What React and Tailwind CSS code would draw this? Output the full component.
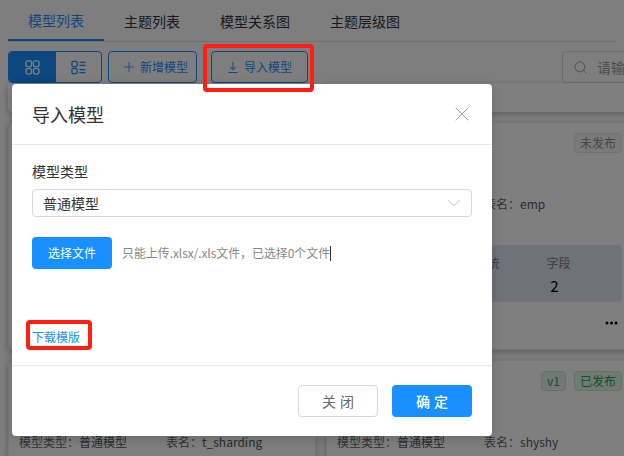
import React from "react";
import { ChevronDown, Plus, Search, X } from "lucide-react";

const tabs = ["模型列表", "主题列表", "模型关系图", "主题层级图"];

const GridIcon = () => (
  <svg width="15" height="15" viewBox="0 0 16 16" fill="none" stroke="currentColor" strokeWidth="1.4">
    <rect x="1" y="1" width="6" height="6" rx="1.5" />
    <rect x="9" y="1" width="6" height="6" rx="1.5" />
    <rect x="1" y="9" width="6" height="6" rx="2.5" />
    <rect x="9" y="9" width="6" height="6" rx="2.5" />
  </svg>
);

const ListIcon = () => (
  <svg width="15" height="15" viewBox="0 0 16 16" fill="none" stroke="currentColor" strokeWidth="1.4">
    <rect x="1" y="1.5" width="5.5" height="5.5" rx="1.5" />
    <rect x="1" y="9" width="5.5" height="5.5" rx="1.5" />
    <path d="M9 2.5h6.5M9 5.8h6.5M9 10.2h6.5M9 13.5h6.5" />
  </svg>
);

const ImportIcon = () => (
  <svg width="10" height="11" viewBox="0 0 10 11" fill="none" stroke="currentColor" strokeWidth="1">
    <path d="M5 0v7.5M2 4.8l3 3 3-3M0.5 10.5h9" />
  </svg>
);

const Tag = ({ green, children }) => (
  <span
    className={`flex h-5 items-center rounded-sm border px-[5px] text-xs ${
      green ? "border-[#c5e8cf] bg-[#e3f5e8] text-[#1aa35a]" : "border-[#e4e4e4] bg-[#f4f4f4] text-[#8c8c8c]"
    }`}
  >
    {children}
  </span>
);

const ModelCard = ({ tags, type, table, stats }) => (
  <div className="flex h-[228px] flex-col rounded-sm border border-[#ececec] bg-white pl-[10px] pr-[11px] pt-[10px] shadow-[0_2px_6px_rgba(0,0,0,0.25)]">
    <div className="flex h-5 justify-end gap-2">{tags}</div>
    <div className="mt-[41px] flex h-5 items-center text-xs text-[#666]">
      <span className="w-[147px]">{type && <>模型类型：<span className="text-[#555]">{type}</span></>}</span>
      <span>表名：<span className="text-[#555]">{table}</span></span>
    </div>
    {stats && (
      <>
        <div className="mt-[31px] flex h-[57px] justify-end rounded bg-[#dde5f3] pr-[28px] pt-[10px]">
          <div className="w-[71px] text-center text-xs text-[#777]">系统</div>
          <div className="flex w-[71px] flex-col items-center text-xs text-[#777]">
            <span>字段</span>
            <span className="mt-[5px] pr-2 text-[15px] leading-5 text-black">2</span>
          </div>
        </div>
        <div className="mt-[19px] flex justify-end pr-[4px] text-black">
          <svg width="13" height="4" viewBox="0 0 13 4" fill="currentColor">
            <circle cx="2" cy="2" r="1.5" />
            <circle cx="6.5" cy="2" r="1.5" />
            <circle cx="11" cy="2" r="1.5" />
          </svg>
        </div>
      </>
    )}
  </div>
);

export default function App() {
  return (
    <div
      className="relative h-[456px] w-[624px] overflow-hidden bg-[#fdfdfd] text-sm"
      style={{ fontFamily: '"Noto Sans CJK SC", "Liberation Sans", sans-serif' }}
    >
      <div className="mx-2 flex h-[42px] border-b border-[#e0e0e0]">
        {tabs.map((t, i) => (
          <div
            key={t}
            className={`flex h-[41px] items-center px-5 ${
              i === 0 ? "border-b-2 border-[#1890ff] text-[#1890ff]" : "text-[#333]"
            }`}
          >
            {t}
          </div>
        ))}
      </div>

      <div className="mt-[9px] flex h-[32px] w-[770px] items-center pl-2">
        <div className="flex h-8 w-[94px] shrink-0 overflow-hidden rounded-sm border border-[#1890ff]">
          <div className="flex w-[47px] items-center justify-center bg-[#1890ff] text-white"><GridIcon /></div>
          <div className="flex flex-1 items-center justify-center text-[#1890ff]"><ListIcon /></div>
        </div>
        <button className="ml-[6px] flex h-8 w-[89px] shrink-0 items-center gap-[3px] rounded-sm border border-[#1890ff] pl-3 text-xs text-[#1890ff]">
          <Plus size={16} strokeWidth={1.2} />
          新增模型
        </button>
        <button className="ml-[14px] flex h-8 w-[97px] shrink-0 items-center gap-[6px] rounded-sm border border-[#1890ff] pl-4 text-xs text-[#1890ff]">
          <ImportIcon />
          导入模型
        </button>
        <div className="ml-[254px] flex h-8 w-[200px] shrink-0 items-center rounded-sm border border-[#d9d9d9] pl-[10px] text-sm text-[#999]">
          <Search size={15} strokeWidth={1.2} className="text-[#888]" />
          <span className="ml-[9px]">请输入</span>
        </div>
      </div>

      <div className="ml-2 grid w-[626px] grid-cols-[308px_308px] grid-rows-[29px_228px_228px] gap-[10px]">
        <div className="rounded-sm bg-white shadow-[0_2px_6px_rgba(0,0,0,0.25)]" />
        <div className="rounded-sm bg-white shadow-[0_2px_6px_rgba(0,0,0,0.25)]" />
        <ModelCard table="" tags={null} />
        <ModelCard table="emp" stats tags={<Tag>未发布</Tag>} />
        <ModelCard type="普通模型" table="t_sharding" tags={null} />
        <ModelCard
          type="普通模型"
          table="shyshy"
          tags={
            <>
              <Tag green>v1</Tag>
              <Tag green>已发布</Tag>
            </>
          }
        />
      </div>

      {/* mask + modal */}
      <div className="absolute inset-0 bg-black/50">
        <div className="ml-3 mt-[84px] flex h-[352px] w-[480px] flex-col rounded bg-white shadow-[0_4px_12px_rgba(0,0,0,0.15)]">
          <div className="flex h-[61px] shrink-0 items-center justify-between border-b border-[#e8e8e8] pl-5 pr-[18px]">
            <span className="text-lg text-[#333]">导入模型</span>
            <X size={24} strokeWidth={0.8} className="text-[#888]" />
          </div>
          <div className="flex flex-1 flex-col px-5">
            <div className="mt-[16px] text-sm leading-5 text-[#333]">模型类型</div>
            <div className="mt-[8px] flex h-7 items-center justify-between rounded-sm border border-[#d9d9d9] pl-[10px] pr-[6px] text-[#333]">
              普通模型
              <ChevronDown size={22} strokeWidth={1} className="text-[#bbb]" />
            </div>
            <div className="mt-5 flex items-center">
              <button className="h-8 w-20 rounded-sm bg-[#1890ff] text-xs text-white">选择文件</button>
              <span className="ml-[10px] text-xs tracking-[-0.08px] text-[#888]">只能上传.xlsx/.xls文件，已选择0个文件</span>
              <span className="h-[15px] w-px bg-[#333]" />
            </div>
            <a className="mt-[58px] text-xs leading-5 text-[#1890ff]">下载模版</a>
          </div>
          <div className="flex h-[71px] shrink-0 items-center justify-end gap-[14px] border-t border-[#e8e8e8] pr-5">
            <button className="h-8 w-20 rounded-sm border border-[#d9d9d9] pl-1 text-sm tracking-[4px] text-[#666]">关闭</button>
            <button className="h-8 w-20 rounded-sm bg-[#1890ff] pl-1 text-sm font-medium tracking-[4px] text-white">确定</button>
          </div>
        </div>
      </div>

      {/* red annotation boxes */}
      <div className="absolute left-[203px] top-[44px] h-[48px] w-[111px] rounded-sm border-4 border-[#ff1e10]" />
      <div className="absolute left-[26px] top-[320px] h-[30px] w-[66px] rounded-sm border-4 border-[#ff1e10]" />
    </div>
  );
}
